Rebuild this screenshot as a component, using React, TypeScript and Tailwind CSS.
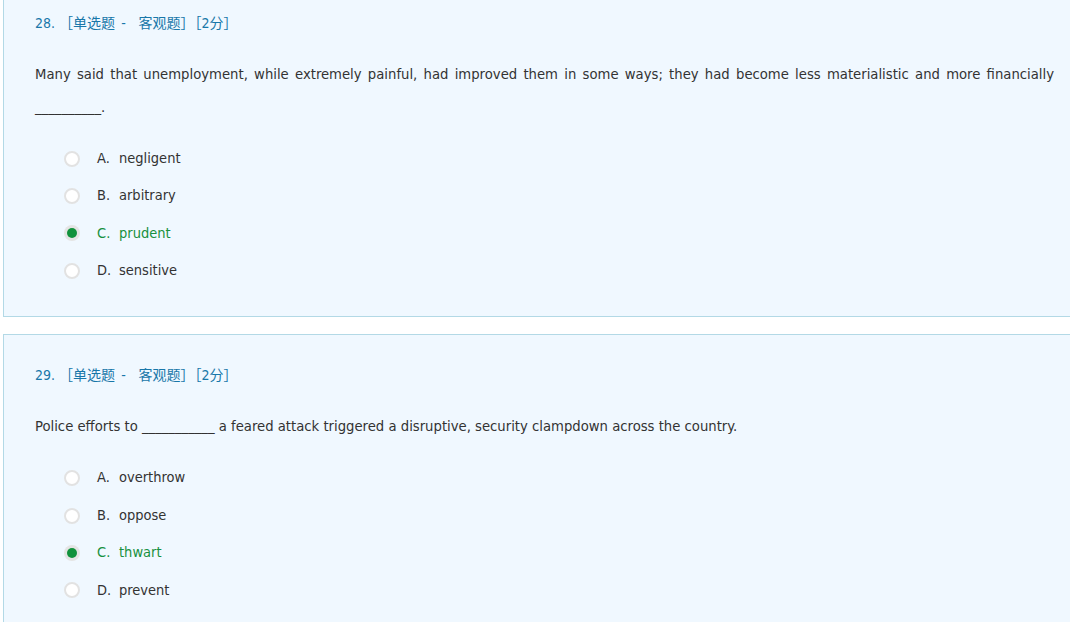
import { clsx } from "clsx";

type Option = { key: string; text: string };

type Question = {
  no: number;
  stem: React.ReactNode;
  options: Option[];
  answer: string;
  gap: string;
};

const questions: Question[] = [
  {
    no: 28,
    stem: (
      <>
        Many said that unemployment, while extremely painful, had improved them in some ways; they had become less
        materialistic and more financially __________.
      </>
    ),
    options: [
      { key: "A", text: "negligent" },
      { key: "B", text: "arbitrary" },
      { key: "C", text: "prudent" },
      { key: "D", text: "sensitive" },
    ],
    answer: "C",
    gap: "mt-[17px]",
  },
  {
    no: 29,
    stem: (
      <>Police efforts to ___________ a feared attack triggered a disruptive, security clampdown across the country.</>
    ),
    options: [
      { key: "A", text: "overthrow" },
      { key: "B", text: "oppose" },
      { key: "C", text: "thwart" },
      { key: "D", text: "prevent" },
    ],
    answer: "C",
    gap: "mt-[18px]",
  },
];

function Radio({ checked }: { checked: boolean }) {
  if (checked) {
    return (
      <span className="flex h-[16px] w-[16px] items-center justify-center rounded-full bg-[#e4e4e4]">
        <span className="h-[10px] w-[10px] rounded-full bg-[#11923c]" />
      </span>
    );
  }
  return <span className="h-[16px] w-[16px] rounded-full border-2 border-[#e2e2e2] bg-white" />;
}

function QuestionCard({ q, first }: { q: Question; first?: boolean }) {
  return (
    <section
      className={clsx(
        "w-[1080px] border border-[#b3d9e6] bg-[#f0f8ff] pl-[31px] pr-[28px] pt-[30px]",
        first ? "-mt-[18px] pb-[26px]" : "pb-[27px]"
      )}
    >
      <h2 className="text-[14px] leading-[20px] text-[#1877a9]">
        {q.no}. ［单选题{"\u2002"}-{"\u2003"}客观题］［2分］
      </h2>
      <p className="mt-[24px] text-justify text-[14.7px] leading-[33px] text-[#333]">{q.stem}</p>
      <ul className={clsx("flex flex-col pl-[29px]", q.gap)}>
        {q.options.map((o) => {
          const on = o.key === q.answer;
          return (
            <li
              key={o.key}
              className={clsx(
                "flex h-[37.4px] items-center text-[14.5px]",
                on ? "text-[#179040]" : "text-[#333]"
              )}
            >
              <Radio checked={on} />
              <span className="ml-[17px] w-[22px]">{o.key}.</span>
              <span>{o.text}</span>
            </li>
          );
        })}
      </ul>
    </section>
  );
}

export default function App() {
  return (
    <main
      className="h-[622px] w-[1070px] overflow-hidden bg-white pl-[3px]"
      style={{ fontFamily: '"DejaVu Sans Condensed", "DejaVu Sans", "Noto Sans CJK SC", sans-serif' }}
    >
      <div className="flex flex-col gap-[17px]">
        <QuestionCard q={questions[0]} first />
        <QuestionCard q={questions[1]} />
      </div>
    </main>
  );
}
